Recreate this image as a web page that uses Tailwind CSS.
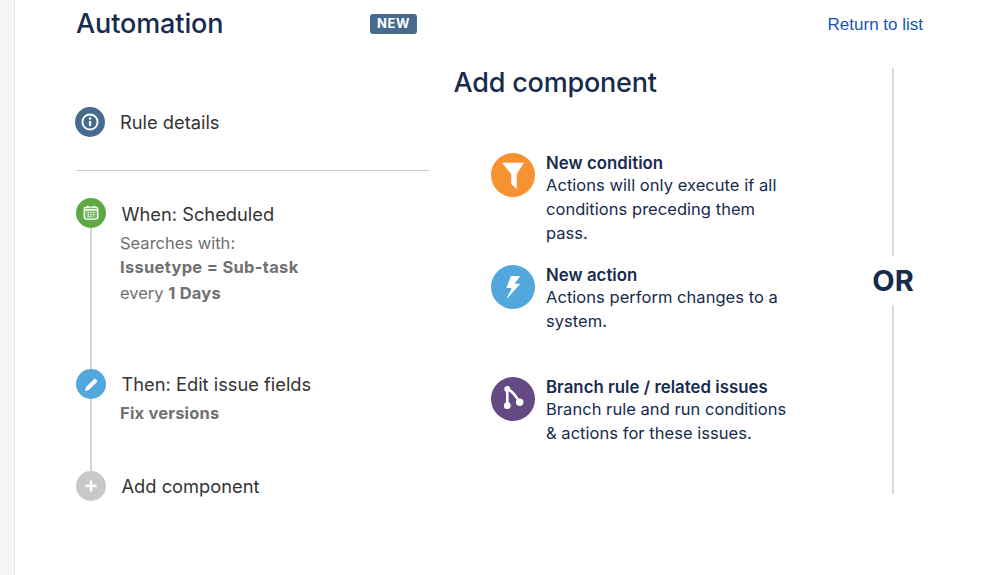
<!DOCTYPE html>
<html lang="en">
<head>
  <meta charset="UTF-8">
  <meta name="viewport" content="width=device-width, initial-scale=1.0">
  <title>Automation</title>
  <script src="https://cdn.jsdelivr.net/npm/@tailwindcss/browser@4"></script>
</head>
<body class="bg-white font-['Inter',sans-serif] overflow-hidden">
  <div class="flex h-[575px] w-[999px]">
    <!-- Sidebar edge -->
    <div class="w-[15px] shrink-0 bg-[#f4f5f7] border-r border-[#e6e8eb]"></div>

    <main class="flex-1 pl-[61px]">
      <!-- Header -->
      <header class="flex items-center h-[48px] w-[847px]">
        <h1 class="w-[294px] text-[27px] font-medium tracking-[-0.1px] leading-[48px] text-[#172b4d]">Automation</h1>
        <span class="flex items-center justify-center w-[47px] h-[20px] rounded-[3px] bg-[#476a8f] text-white text-[13px] font-bold tracking-[0.6px]">NEW</span>
        <a class="ml-auto pt-px text-[17px] text-[#1257b8] font-['Liberation_Sans',sans-serif]">Return to list</a>
      </header>

      <div class="flex">
        <!-- Rule steps -->
        <section class="w-[353px] shrink-0 pt-[59px]">
          <div class="flex items-center h-[30px] -ml-px">
            <span class="flex items-center justify-center w-[30px] h-[30px] rounded-full bg-[#476a8f]">
              <svg width="20" height="20" viewBox="0 0 18 18" fill="none"><circle cx="9" cy="9" r="6.8" stroke="white" stroke-width="1.7"/><rect x="8" y="8" width="2" height="4.6" rx="0.5" fill="white"/><circle cx="9" cy="5.9" r="1.1" fill="white"/></svg>
            </span>
            <span class="ml-[15px] pt-[2px] text-[18.3px] text-[#333]">Rule details</span>
          </div>

          <div class="h-px mt-[33px] mb-[27px] bg-[#c9cbce]"></div>

          <div class="flex h-[171px]">
            <div class="flex flex-col items-center w-[30px]">
              <span class="flex items-center justify-center w-[30px] h-[30px] shrink-0 rounded-full bg-[#5fa845]">
                <svg width="18" height="18" viewBox="0 0 16 16" fill="none"><rect x="2" y="2.8" width="12" height="10.6" rx="1.6" fill="white" fill-opacity="0.2" stroke="white" stroke-width="1.2"/><path d="M2.5 5.2h11" stroke="white" stroke-width="1.4"/><path d="M5 1.5v2M11 1.5v2" stroke="white" stroke-width="1.1"/><path d="M5 7.6h1.2M7.4 7.6h1.2M9.8 7.6h1.2M5 9.4h1.2M7.4 9.4h1.2M9.8 9.4h1.2M5 11.1h1.2M7.4 11.1h1.2" stroke="white" stroke-width="1"/></svg>
              </span>
              <span class="w-[2px] flex-1 bg-[#d4d4d4]"></span>
            </div>
            <div class="ml-[15.5px]">
              <div class="h-[30px] leading-[33px] text-[18.3px] text-[#333]">When: Scheduled</div>
              <div class="-ml-[1.5px] mt-[3px] text-[16.5px] leading-[25px] text-[#707070]">
                <p>Searches with:</p>
                <p class="font-bold tracking-[0.3px] -mt-px mb-px">Issuetype = Sub-task</p>
                <p>every <b class="tracking-[0.2px]">1 Days</b></p>
              </div>
            </div>
          </div>

          <div class="flex h-[102px]">
            <div class="flex flex-col items-center w-[30px]">
              <span class="flex items-center justify-center w-[30px] h-[30px] shrink-0 rounded-full bg-[#52a8dd]">
                <svg width="19" height="19" viewBox="0 0 16 16"><path d="M2.5 13.5l.9-3.3 6.6-6.6a1.2 1.2 0 0 1 1.7 0l.7.7a1.2 1.2 0 0 1 0 1.7l-6.6 6.6z" fill="white"/></svg>
              </span>
              <span class="w-[2px] flex-1 bg-[#d4d4d4]"></span>
            </div>
            <div class="ml-[15.5px]">
              <div class="h-[30px] leading-[31px] text-[18.3px] text-[#333]">Then: Edit issue fields</div>
              <div class="-ml-[1.5px] mt-[2px] text-[16.5px] leading-[25px] font-bold tracking-[0.2px] text-[#707070]">Fix versions</div>
            </div>
          </div>

          <div class="flex items-center h-[30px]">
            <span class="flex items-center justify-center w-[30px] h-[30px] rounded-full bg-[#c8c8c8]">
              <svg width="14" height="14" viewBox="0 0 14 14"><path d="M7 2.5v9M2.5 7h9" stroke="white" stroke-width="2.6" stroke-linecap="round"/></svg>
            </span>
            <span class="ml-[15.5px] pt-[2px] text-[18.3px] text-[#333]">Add component</span>
          </div>
        </section>

        <!-- Component choices -->
        <section class="w-[439px] shrink-0 pl-[25px]">
          <h2 class="text-[27px] font-medium tracking-[-0.2px] leading-[40px] mt-[15px] -ml-[0.5px] text-[#172b4d]">Add component</h2>

          <div class="pl-[37px] mt-[50px] flex flex-col text-[#172b4d]">
            <div class="flex h-[112px]">
              <svg class="shrink-0" width="44" height="44" viewBox="0 0 44 44"><circle cx="22" cy="22" r="22" fill="#f79233"/><path d="M11.5 10h21l-7 11v14.5l-5-4.5V21z" fill="white" stroke="white" stroke-width="0.6" stroke-linejoin="round"/></svg>
              <div class="ml-[11px] text-[16.5px] leading-[24px] tracking-[0.04px]">
                <div class="font-semibold text-[16.8px] leading-[20px]">New condition</div>
                <p>Actions will only execute if all<br>conditions preceding them<br>pass.</p>
              </div>
            </div>
            <div class="flex h-[112px]">
              <svg class="shrink-0" width="44" height="44" viewBox="0 0 44 44"><circle cx="22" cy="22" r="22" fill="#52a8dd"/><path d="M20 11h9.3l-5.6 7.7h5.6L15.3 34.3 20.7 23h-5.4z" fill="white"/></svg>
              <div class="ml-[11px] text-[16.5px] leading-[24px] tracking-[0.04px]">
                <div class="font-semibold text-[16.8px] leading-[20px]">New action</div>
                <p>Actions perform changes to a<br>system.</p>
              </div>
            </div>
            <div class="flex h-[112px]">
              <svg class="shrink-0" width="44" height="44" viewBox="0 0 44 44" fill="none"><circle cx="22" cy="22" r="22" fill="#654982"/><path d="M16.3 12v16.7M16.3 12Q22 14 28.7 25.3" stroke="white" stroke-width="2.6"/><circle cx="16.3" cy="12" r="3" fill="white"/><circle cx="16.3" cy="28.7" r="3.4" fill="white"/><circle cx="28.7" cy="25.3" r="3.7" fill="white"/></svg>
              <div class="ml-[11px] text-[16.5px] leading-[24px] tracking-[0.04px]">
                <div class="font-semibold text-[16.8px] leading-[20px]">Branch rule / related issues</div>
                <p>Branch rule and run conditions<br>&amp; actions for these issues.</p>
              </div>
            </div>
          </div>
        </section>

        <!-- OR divider -->
        <aside class="flex flex-col items-center w-[80px] -ml-[15px] pt-[20px] h-[446px]">
          <span class="w-[2px] flex-1 bg-[#d8dae2]"></span>
          <span class="py-[8px] text-[29px] leading-[33px] font-bold text-[#172b4d]">OR</span>
          <span class="w-[2px] h-[189px] bg-[#d8dae2]"></span>
        </aside>
      </div>
    </main>
  </div>
</body>
</html>
